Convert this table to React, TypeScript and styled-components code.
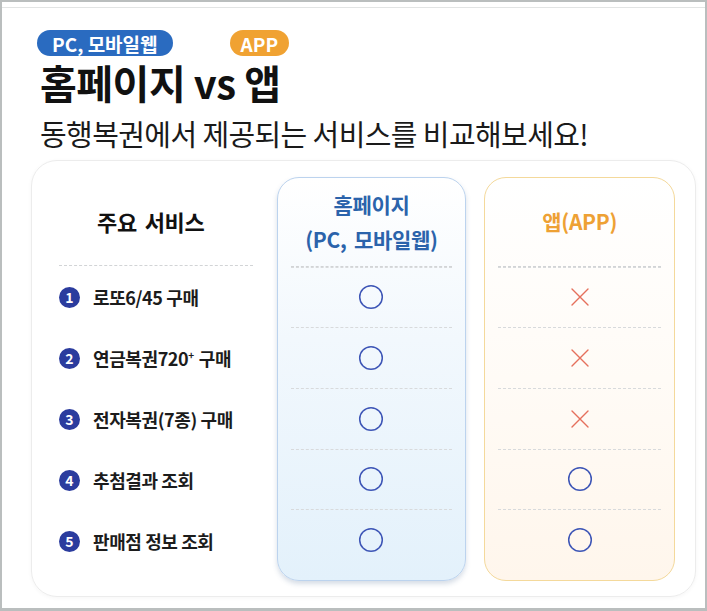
import React from "react";
import styled, {createGlobalStyle} from "styled-components";

const GlobalStyle = createGlobalStyle`
  html, body {
    margin: 0;
    padding: 0;
    background: #babebe;
  }
  body {
    font-family: "Noto Sans CJK KR", "Noto Sans", sans-serif;
    color: #111;
  }
`;

const Frame = styled.div`
  margin: 2px 2px 3px 2px;
  height: 606px;
  background: #fff;
  padding-top: 5px;
  box-sizing: border-box;
`;

const Sheet = styled.div`
  border-top: 1px solid #e2e4e4;
  padding: 22px 0 0 35px;
`;

const BadgeRow = styled.div`
  display: flex;
  align-items: center;
  height: 26px;
`;

const Badge = styled.span<{tone: "blue" | "orange"; offset?: number}>`
  display: inline-flex;
  align-items: center;
  height: 26px;
  padding: 0 ${(p) => (p.tone === "blue" ? 15 : 11)}px;
  margin-left: ${(p) => p.offset ?? 0}px;
  border-radius: 13px;
  background: ${(p) => (p.tone === "blue" ? "#2a6bc0" : "#f0a232")};
  color: #fff;
  font-size: 19px;
  font-weight: 700;
  line-height: 1;
`;

const Title = styled.h1`
  margin: 4px 0 0 3px;
  font-size: 40px;
  font-weight: 700;
  line-height: 44px;
  letter-spacing: -0.5px;
  color: #111;
`;

const Subtitle = styled.p`
  margin: 11px 0 0 3px;
  font-size: 29px;
  font-weight: 400;
  line-height: 36px;
  letter-spacing: -0.6px;
  color: #1a1a1a;
`;

const Card = styled.div`
  margin: 9px 0 0 -6px;
  width: 665px;
  height: 437px;
  box-sizing: border-box;
  border: 1px solid #ececec;
  border-radius: 26px;
  box-shadow: 0 1px 4px rgba(0, 0, 0, 0.04);
  padding: 16px 20px 15px 27px;
  display: flex;
  align-items: stretch;
`;

const Column = styled.div<{variant: "plain" | "web" | "app"; width: number; lead?: number}>`
  display: flex;
  flex-direction: column;
  box-sizing: border-box;
  width: ${(p) => p.width}px;
  margin-left: ${(p) => p.lead ?? 0}px;
  border-radius: 22px;
  padding: 0 ${(p) => (p.variant === "plain" ? 0 : 13)}px 10px;
  ${(p) =>
    p.variant === "web" &&
    `
    border: 1px solid #bcd3ee;
    background: linear-gradient(180deg, #ffffff 0%, #f2f8fd 40%, #e3f1fb 100%);
    box-shadow: 0 3px 5px rgba(70, 100, 140, 0.22);
  `}
  ${(p) =>
    p.variant === "app" &&
    `
    border: 1px solid #f4d99b;
    background: linear-gradient(180deg, #ffffff 0%, #fffbf6 50%, #fff6ec 100%);
  `}
`;

const HeaderCell = styled.div<{color: string; shift?: number; size?: number}>`
  height: 88px;
  display: flex;
  align-items: center;
  justify-content: center;
  text-align: center;
  padding-right: ${(p) => p.shift ?? 0}px;
  font-size: ${(p) => p.size ?? 21}px;
  font-weight: 700;
  line-height: 35px;
  letter-spacing: -0.3px;
  word-spacing: 3px;
  color: ${(p) => p.color};
  border-bottom: 1px dashed #d2d4d6;
`;

const Row = styled.div<{divider: boolean}>`
  height: 60px;
  display: flex;
  align-items: center;
  justify-content: center;
  border-top: 1px dashed ${(p) => (p.divider ? "#d8dadc" : "transparent")};
  &:first-of-type {
    border-top: none;
    height: 61px;
  }
`;

const ServiceRow = styled(Row)`
  justify-content: flex-start;
  gap: 13px;
`;

const Num = styled.span`
  width: 21px;
  height: 21px;
  border-radius: 50%;
  background: #2b3c9e;
  color: #fff;
  font-size: 14px;
  font-weight: 700;
  display: inline-flex;
  align-items: center;
  justify-content: center;
  line-height: 1;
`;

const ServiceName = styled.span`
  font-size: 18px;
  font-weight: 700;
  letter-spacing: -0.4px;
  color: #1c1c1c;
  sup {
    font-size: 10px;
    vertical-align: 7px;
    margin-right: 5px;
  }
`;

const Circle = () => (
  <svg width="26" height="26" viewBox="0 0 26 26">
    <circle cx="13" cy="13" r="11.3" fill="none" stroke="#3d55b6" strokeWidth="1.5" />
  </svg>
);

const Cross = () => (
  <svg width="20" height="20" viewBox="0 0 20 20">
    <path d="M2 2 L18 18 M18 2 L2 18" stroke="#e5705c" strokeWidth="1.4" strokeLinecap="round" />
  </svg>
);

const services: {name: React.ReactNode; web: boolean; app: boolean}[] = [
  {name: "로또6/45 구매", web: true, app: false},
  {name: <>연금복권720<sup>+</sup>구매</>, web: true, app: false},
  {name: "전자복권(7종) 구매", web: true, app: false},
  {name: "추첨결과 조회", web: true, app: true},
  {name: "판매점 정보 조회", web: true, app: true},
];

export default function App() {
  return (
    <>
      <GlobalStyle />
      <Frame>
        <Sheet>
          <BadgeRow>
            <Badge tone="blue">PC, 모바일웹</Badge>
            <Badge tone="orange" offset={57}>APP</Badge>
          </BadgeRow>
          <Title>홈페이지 vs 앱</Title>
          <Subtitle>동행복권에서 제공되는 서비스를 비교해보세요!</Subtitle>
          <Card>
            <Column variant="plain" width={194}>
              <HeaderCell color="#111" shift={10} size={22}>주요 서비스</HeaderCell>
              {services.map((s, i) => (
                <ServiceRow key={i} divider={false}>
                  <Num>{i + 1}</Num>
                  <ServiceName>{s.name}</ServiceName>
                </ServiceRow>
              ))}
            </Column>
            <Column variant="web" width={190} lead={24}>
              <HeaderCell color="#2b63ab">
                홈페이지
                <br />
                (PC, 모바일웹)
              </HeaderCell>
              {services.map((s, i) => (
                <Row key={i} divider>
                  {s.web ? <Circle /> : <Cross />}
                </Row>
              ))}
            </Column>
            <Column variant="app" width={191} lead={18}>
              <HeaderCell color="#eea134">앱(APP)</HeaderCell>
              {services.map((s, i) => (
                <Row key={i} divider>
                  {s.app ? <Circle /> : <Cross />}
                </Row>
              ))}
            </Column>
          </Card>
        </Sheet>
      </Frame>
    </>
  );
}
